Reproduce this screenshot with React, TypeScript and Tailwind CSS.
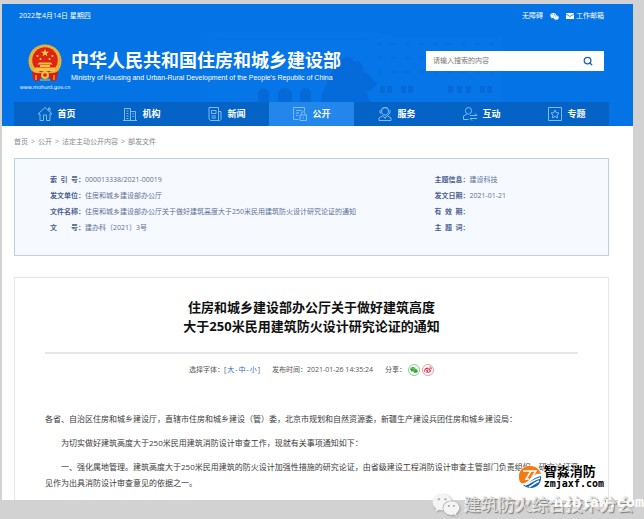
import type { ReactNode } from 'react';
import { FaWeixin, FaWeibo } from 'react-icons/fa';
import { Search } from 'lucide-react';

interface NavItem {
  label: string;
  icon: ReactNode;
  active?: boolean;
}

interface MetaItem {
  label: string;
  value: string;
}

const NavIcon = ({ children }: { children: ReactNode }) => (
  <svg viewBox="0 0 16 16" className="h-4 w-4 shrink-0 text-[#7cbcf8]" fill="none" stroke="currentColor" strokeWidth="1">
    {children}
  </svg>
);

const navItems: NavItem[] = [
  {
    label: '首页',
    icon: <path d="M1 8 8 1.500 15 8h-2v6.500h-3.500V9h-3v5.500H3V8zM11.500 4V2h1.500v3.500" />,
  },
  {
    label: '机构',
    icon: <path d="M1 14.500h14M2.500 14.500v-12h6v12M8.500 5.500h5v9M4.500 5h2M4.500 7.500h2M4.500 10h2M4.500 12.500h2M10.500 8h1.500M10.500 10.500h1.500" />,
  },
  {
    label: '新闻',
    icon: <path d="M2 1.500h9.500v13H3.500L2 13zM11.500 5.500H14v8l-1 1h-1.500M4.500 4.500h4.500v3H4.500zM4.500 10h4.500M4.500 12h4.500" />,
  },
  {
    label: '公开',
    active: true,
    icon: <path d="M12.500 5.500v-4h-11v12h5M4 4.500h6M4 7h3M4 9.500h2M8 9h6.500v5.500H8zM9.500 9V7.500a1.500 1.500 0 0 1 3.500 0V9M11.200 11v1.500" />,
  },
  {
    label: '服务',
    icon: <path d="M4.500 5a3.500 3.500 0 0 1 7 0c0 2.500-1.500 4-3.500 4S4.500 7.500 4.500 5zM3 4v3h1.500M13 4v3l-2 2M4.500 3.500C5 1 11 1 11.500 3.500M6 9.500 2 12v2.500h12V12l-4-2.500M6 9.500l2 3 2-3" />,
  },
  {
    label: '互动',
    icon: <path d="M3.500 4.500a3 3 0 0 1 6 0c0 2-1 3.500-3 3.500s-3-1.500-3-3.500zM5 8l-3.500 2v3.500h5M8 9.500h7l-2-2M15 12.500H8l2 2" />,
  },
  {
    label: '专题',
    icon: <path d="M1.500 1.500h13v13h-13zM8 4l1.200 2.600 2.800.4-2 2 .5 2.800L8 10.500l-2.500 1.300L6 9 4 7l2.800-.4z" />,
  },
];

const metaLeft: MetaItem[] = [
  { label: '索引号', value: '000013338/2021-00019' },
  { label: '发文单位', value: '住房和城乡建设部办公厅' },
  { label: '文件名称', value: '住房和城乡建设部办公厅关于做好建筑高度大于250米民用建筑防火设计研究论证的通知' },
  { label: '文号', value: '建办科〔2021〕3号' },
];

const metaRight: MetaItem[] = [
  { label: '主题信息', value: '建设科技' },
  { label: '发文日期', value: '2021-01-21' },
  { label: '有效期', value: '' },
  { label: '主题词', value: '' },
];

const crumbs = ['首页', '公开', '法定主动公开内容', '部发文件'];

const Emblem = () => (
  <svg viewBox="0 0 34 38" className="h-[38px] w-[34px]">
    <circle cx="17" cy="17" r="16.500" fill="#e9b63a" />
    <circle cx="17" cy="17" r="15" fill="none" stroke="#d9a02c" strokeWidth="1" strokeDasharray="1.500 1.500" />
    <circle cx="17" cy="16" r="12.800" fill="#df2415" />
    <path d="m17 5 1 2.800h3l-2.400 1.700.9 2.800L17 10.600l-2.500 1.700.9-2.800L13 7.800h3z" fill="#ffd84a" />
    <g fill="#ffd84a">
      <circle cx="9.500" cy="12" r="1" />
      <circle cx="12.500" cy="15" r="1" />
      <circle cx="21.500" cy="15" r="1" />
      <circle cx="24.500" cy="12" r="1" />
    </g>
    <path d="M11 18.500h12l1.500 2h-15zM12 21h10v2H12zM7 23.500h20v3.500H7z" fill="#f3c445" />
    <path d="M4 27c4 3 8 2.500 13 1 5 1.500 9 2 13-1l-1 8c-2 3-5 2-6 1l-2-3h-8l-2 3c-1 1-4 2-6-1z" fill="#d81e12" />
    <circle cx="17" cy="31" r="4" fill="#efbd3c" />
    <circle cx="17" cy="31" r="1.800" fill="#d81e12" />
    <path d="M8 31v5M26 31v5M12 36h10" stroke="#efbd3c" strokeWidth="1.200" />
  </svg>
);

// faint office building behind the header
const Backdrop = () => (
  <svg viewBox="0 0 631 98" preserveAspectRatio="xMidYMax slice" className="absolute inset-x-0 top-0 h-[98px] w-full">
    <path d="M205 28h170l20 5h105v65H205z" fill="#2b8df0" opacity="0.08" />
    <g fill="#0350b4" opacity="0.28">
      <path d="M256 98V88q5-8 11 0v10zM276 98V88q6-8 14 0v10zM298 98V88q5-8 11 0v10z" />
      <path d="M378 82h5v7h-5zM385 82h5v7h-5zM399 82h5v7h-5zM406 82h5v7h-5zM446 82h5v7h-5zM455 82h5v7h-5zM464 82h5v7h-5zM478 82h5v7h-5zM485 82h5v7h-5z" />
    </g>
    <path
      d="M320 98c-2-12 6-14 5-22 6-4 3-14 12-16 2-9 13-8 15-2 8-3 10 6 9 10 9 0 8 9 14 11-2 6-6 7-10 8 0 5 2 8 3 11z"
      fill="#0350b4"
      opacity="0.25"
    />
    <path d="M375 40h120M375 54h120M375 68h120" stroke="#0350b4" strokeWidth="3" strokeDasharray="5 9" opacity="0.1" />
    <path d="M215 35h150" stroke="#0350b4" strokeWidth="1" opacity="0.12" />
  </svg>
);

const MetaList = ({ items }: { items: MetaItem[] }) => (
  <dl>
    {items.map((item) => (
      <div key={item.label} className="flex h-4 items-center whitespace-nowrap">
        <dt className="flex font-bold text-[#4a6090]">
          <span className="flex w-7 justify-between">
            {item.label.split('').map((char) => (
              <span key={char}>{char}</span>
            ))}
          </span>
          <span>：</span>
        </dt>
        <dd className="text-[#5d6f96]">{item.value}</dd>
      </div>
    ))}
  </dl>
);

const Header = () => (
  <header className="relative bg-[#0473e6] text-white">
    <Backdrop />
    <div className="relative flex h-6 items-center justify-between pr-[29px] pl-[17px] text-[7px]">
      <span>2022年4月14日 星期四</span>
      <div className="flex items-center gap-[7px]">
        <a href="#accessible">无障碍</a>
        <a href="#wechat" aria-label="微信">
          <FaWeixin className="h-[9px] w-[9px]" />
        </a>
        <a href="#mail" className="flex items-center gap-0.5">
          <svg viewBox="0 0 8 6" className="h-[6px] w-[8px]">
            <path d="M0 0h8v6H0z" fill="#fff" />
            <path d="m0 1 4 2.500L8 1" fill="none" stroke="#0473e6" strokeWidth="0.800" />
          </svg>
          工作邮箱
        </a>
      </div>
    </div>

    <div className="relative flex h-[74px] items-start justify-between pt-4 pr-[29px] pl-[17px]">
      <div className="flex">
        <div className="flex w-[52px] flex-col items-center">
          <Emblem />
          <span className="font-['DejaVu_Sans',sans-serif] text-[5px] leading-[11px]">www.mohurd.gov.cn</span>
        </div>
        <div className="pt-1 whitespace-nowrap">
          <h1 className="text-[18px] leading-6 font-bold">中华人民共和国住房和城乡建设部</h1>
          <p className="font-['Liberation_Sans',sans-serif] text-[7px] leading-3">
            Ministry of Housing and Urban-Rural Development of the People's Republic of China
          </p>
        </div>
      </div>
      <form className="mt-[7px] flex h-5 w-[178px] items-center bg-white px-[7px]">
        <input
          type="text"
          aria-label="搜索"
          placeholder="请输入搜索的内容"
          className="min-w-0 flex-1 text-[7px] text-gray-700 outline-none placeholder:text-[#777]"
        />
        <button type="button" aria-label="搜索" className="mr-1 text-[#1263b8]">
          <Search className="h-[10px] w-[10px]" strokeWidth={3} />
        </button>
      </form>
    </div>

    <nav className="relative mr-6 ml-3 grid h-6 grid-cols-7 bg-[#0563c6]">
      {navItems.map((item) => (
        <a
          key={item.label}
          href="#nav"
          className={`flex items-center justify-center gap-1 text-[9px] font-bold ${item.active ? 'bg-[#2286ea]' : ''}`}
        >
          <NavIcon>{item.icon}</NavIcon>
          {item.label}
        </a>
      ))}
    </nav>
  </header>
);

const Article = () => (
  <article className="mt-[21px] border border-b-0 border-[#e6e6e6] px-[30px] pt-5 pb-[9px]">
    <h2 className="text-center text-[13px] leading-[19px] font-bold text-[#111]">
      住房和城乡建设部办公厅关于做好建筑高度
      <br />
      大于250米民用建筑防火设计研究论证的通知
    </h2>
    <hr className="mt-4 border-t-2 border-[#e6e6e6]" />
    <div className="flex h-8 items-center justify-center gap-3 text-[7px] text-[#555]">
      <div className="flex items-center">
        选择字体：[
        <button type="button" className="px-px text-[#1f70c1]">大</button>-
        <button type="button" className="px-px text-[#1f70c1]">中</button>-
        <button type="button" className="px-px text-[#1f70c1]">小</button>]
      </div>
      <span>发布时间：2021-01-26 14:35:24</span>
      <div className="flex items-center">
        <span className="mr-0.5">分享：</span>
        <a href="#wechat" aria-label="分享到微信" className="mr-0.5 grid h-3 w-3 place-items-center rounded-full border border-[#8ccf8c] text-[#2fa52f]">
          <FaWeixin className="h-2 w-2" />
        </a>
        <a href="#weibo" aria-label="分享到微博" className="grid h-3 w-3 place-items-center rounded-full border border-[#ee9aa5] text-[#dc2c44]">
          <FaWeibo className="h-2 w-2" />
        </a>
      </div>
    </div>
    <div className="mt-[25px] -mr-1 space-y-2 text-[8px] leading-4 text-[#3a3a3a]">
      <p>各省、自治区住房和城乡建设厅，直辖市住房和城乡建设（管）委，北京市规划和自然资源委，新疆生产建设兵团住房和城乡建设局：</p>
      <p className="indent-4">为切实做好建筑高度大于250米民用建筑消防设计审查工作，现就有关事项通知如下：</p>
      <p className="indent-4">
        一、强化属地管理。建筑高度大于250米民用建筑的防火设计加强性措施的研究论证，由省级建设工程消防设计审查主管部门负责组织，研究论证意见作为出具消防设计审查意见的依据之一。
      </p>
    </div>
  </article>
);

const Brand = () => (
  <div className="absolute right-10 bottom-[29px] flex items-center gap-0.5 whitespace-nowrap text-black">
    <svg viewBox="0 0 24 24" className="h-6 w-6">
      <circle cx="12" cy="12" r="12" fill="#fff" />
      <path d="M1 13C0 5 7 0 13 1c5 0 9 4 10 8-5-1-9 2-12 6-3 3-6 4-8 3-1-1-2-3-2-5z" fill="#f47a16" />
      <path d="M5 20c6 0 8-7 18-9 1 7-4 12-10 12-3 0-6-1-8-3z" fill="#1467b8" />
      <path d="M5 6h8l-5 8h3M13 6h5l-4 6M7 20c5-1 7-5 15-7M11 22c3-1 5-4 10-6" fill="none" stroke="#fff" strokeWidth="1.500" />
    </svg>
    <div className="[text-shadow:0_0_2px_white,0_0_2px_white]">
      <div className="text-[13px] leading-[14px] font-bold">智淼消防</div>
      <div className="font-['DejaVu_Sans_Mono',monospace] text-[10px] leading-3 font-bold">zmjaxf.com</div>
    </div>
  </div>
);

const Watermark = () => (
  <>
    <div className="absolute right-[10px] bottom-0 flex items-center gap-1 text-[17px] leading-[26px] whitespace-nowrap text-[#dedede] [text-shadow:1px_1px_1px_#777,-1px_-1px_0_#f5f5f5]">
      <FaWeixin className="h-7 w-7 text-[#f4f4f4] drop-shadow-[1px_1px_1px_#999]" />
      建筑防火综合技术分会
    </div>
    <div className="absolute right-0 bottom-[5px] font-['Liberation_Mono',monospace] text-[15px] leading-5 font-bold text-white">
      nzblaw.com
    </div>
  </>
);

export default function App() {
  return (
    <div className="relative min-h-screen overflow-hidden bg-[#d2d2d2] pt-1 pr-[11px] pb-[19px] pl-0.5 font-['Open_Sans','Noto_Sans_CJK_SC',sans-serif]">
      <div className="bg-white">
        <Header />
        <main className="pr-6 pl-3">
          <div className="flex h-8 items-center gap-[3px] text-[7px] text-[#888]">
            {crumbs.map((crumb, i) => (
              <span key={crumb} className="flex gap-[3px]">
                {i > 0 && <span>&gt;</span>}
                <a href="#crumb">{crumb}</a>
              </span>
            ))}
          </div>
          <section className="flex justify-between border border-[#bed0e4] bg-[#f6faff] pt-[13px] pr-[102px] pb-[19px] pl-[35px] text-[7px]">
            <MetaList items={metaLeft} />
            <MetaList items={metaRight} />
          </section>
          <Article />
        </main>
      </div>
      <Brand />
      <Watermark />
    </div>
  );
}
